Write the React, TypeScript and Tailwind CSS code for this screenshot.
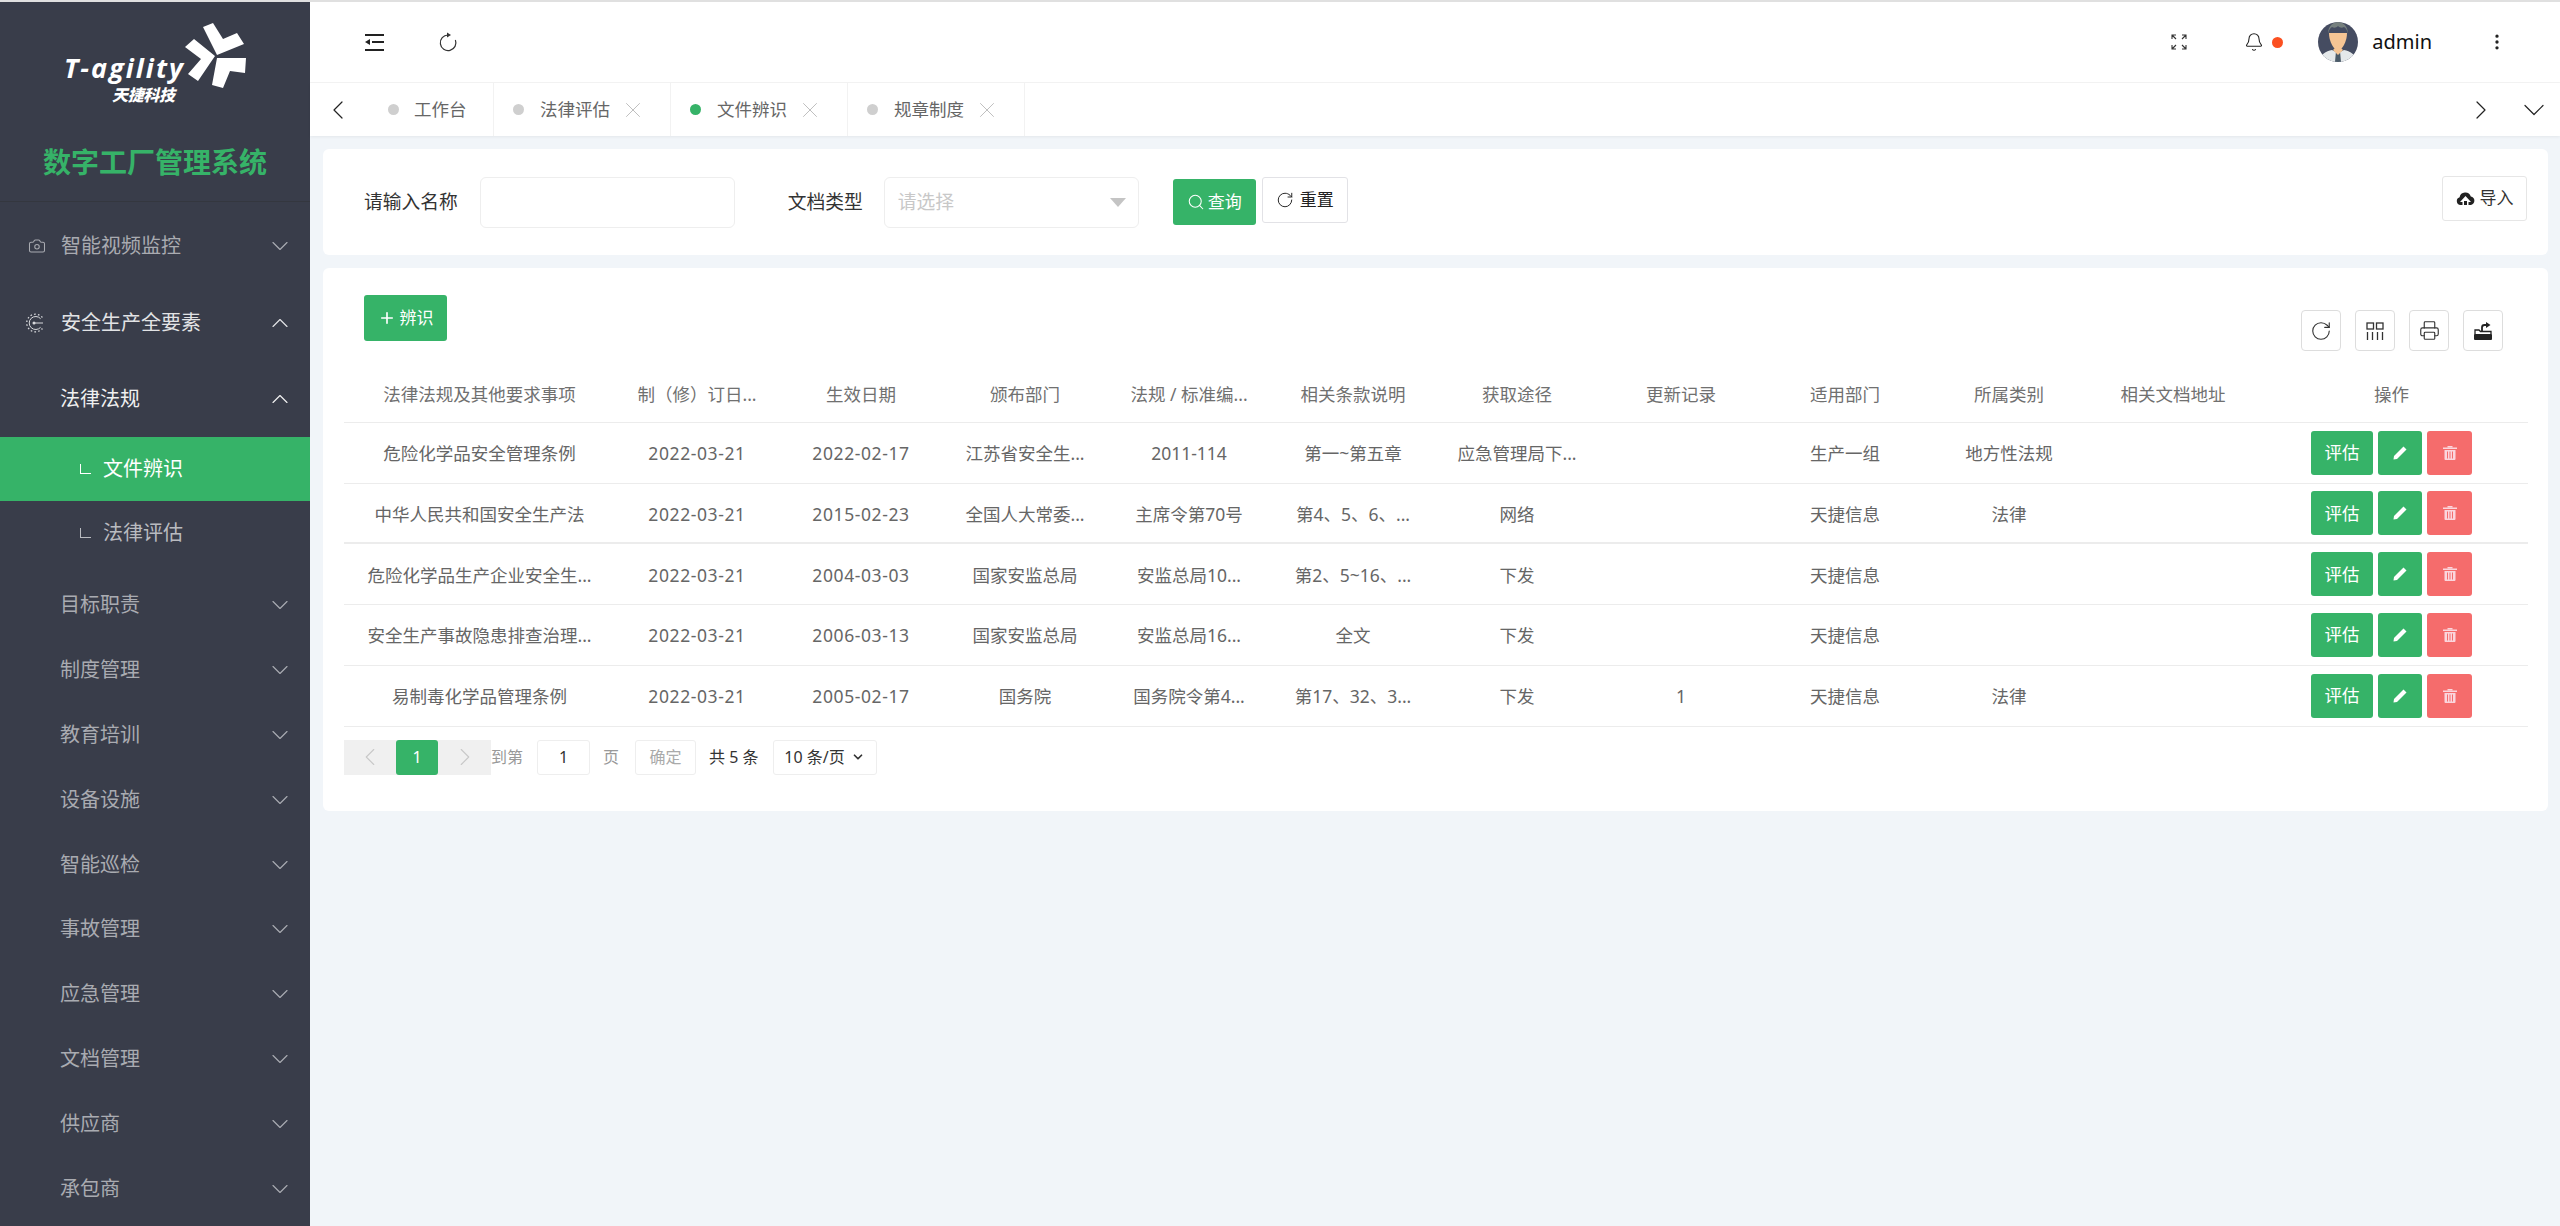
import { Bell, Camera, ChevronDown, ChevronLeft, ChevronRight, ChevronUp, EllipsisVertical, Plus, Printer, RotateCw, Search, X } from "lucide-react";

const rows = [
  ["危险化学品安全管理条例", "2022-03-21", "2022-02-17", "江苏省安全生...", "2011-114", "第一~第五章", "应急管理局下...", "", "生产一组", "地方性法规", ""],
  ["中华人民共和国安全生产法", "2022-03-21", "2015-02-23", "全国人大常委...", "主席令第70号", "第4、5、6、...", "网络", "", "天捷信息", "法律", ""],
  ["危险化学品生产企业安全生...", "2022-03-21", "2004-03-03", "国家安监总局", "安监总局10...", "第2、5~16、...", "下发", "", "天捷信息", "", ""],
  ["安全生产事故隐患排查治理...", "2022-03-21", "2006-03-13", "国家安监总局", "安监总局16...", "全文", "下发", "", "天捷信息", "", ""],
  ["易制毒化学品管理条例", "2022-03-21", "2005-02-17", "国务院", "国务院令第4...", "第17、32、3...", "下发", "1", "天捷信息", "法律", ""],
];

const headers = ["法律法规及其他要求事项", "制（修）订日...", "生效日期", "颁布部门", "法规 / 标准编...", "相关条款说明", "获取途径", "更新记录", "适用部门", "所属类别", "相关文档地址", "操作"];

const menus = ["目标职责", "制度管理", "教育培训", "设备设施", "智能巡检", "事故管理", "应急管理", "文档管理", "供应商", "承包商"];

const tabs = [
  { name: "法律评估", active: false },
  { name: "文件辨识", active: true },
  { name: "规章制度", active: false },
];

function Logo() {
  return (
    <svg width="310" height="110" viewBox="0 0 310 110" className="block">
      <g fill="#ffffff">
        <polygon points="203,25 213,21 223,37 237,31 244,42 217,53" />
        <polygon points="185,45 194,37 215,54 198,79 188,72 201,57" />
        <polygon points="217,56 246,56 245,71 230,69 223,86 212,83" />
        <text x="64" y="76" fontSize="27" fontWeight="700" fontStyle="italic" textLength="119" fontFamily="'Open Sans', sans-serif">T-agility</text>
        <text x="112" y="99" fontSize="16" fontWeight="900" fontStyle="italic" textLength="63" fontFamily="'Noto Sans CJK SC', sans-serif">天捷科技</text>
      </g>
    </svg>
  );
}

function SafetyIcon() {
  return (
    <svg width="20" height="20" viewBox="0 0 20 20" fill="none" stroke="#d8d9dc" strokeLinecap="butt">
      <path d="M16.400 4.500A8.800 8.800 0 1 0 16.400 15.500" strokeWidth="1.300" strokeDasharray="1.600 2.200" />
      <path d="M14.600 5.700A6.500 6.500 0 1 0 14.600 14.300" strokeWidth="1" />
      <path d="M8 10h9" strokeWidth="1" />
      <circle cx="8" cy="10" r="1.500" fill="#d8d9dc" stroke="none" />
    </svg>
  );
}

function OutdentIcon() {
  return (
    <svg width="19" height="17" viewBox="0 0 19 17" fill="#222222">
      <rect x="0" y="0" width="19" height="2" />
      <rect x="7" y="7" width="12" height="2" />
      <rect x="0" y="15" width="19" height="2" />
      <polygon points="0,8 5,5 5,11" />
    </svg>
  );
}

function ReloadIcon() {
  return (
    <svg width="20" height="20" viewBox="0 0 20 20" fill="none" stroke="#333333" strokeWidth="1.200">
      <path d="M10 3A7.800 7.800 0 1 0 17.400 8" />
      <polygon points="9,0.500 13,3 9,5.500" fill="#333333" stroke="none" />
    </svg>
  );
}

function FullscreenIcon() {
  return (
    <svg width="16" height="16" viewBox="0 0 16 16" fill="none" stroke="#333333" strokeWidth="1.100">
      <path d="M1 5V1h4M1 1l4 4M11 1h4v4M15 1l-4 4M1 11v4h4M1 15l4-4M15 11v4h-4M15 15l-4-4" />
    </svg>
  );
}

function Avatar() {
  return (
    <svg width="40" height="40" viewBox="0 0 40 40" className="rounded-full">
      <rect width="40" height="40" fill="#454c61" />
      <path d="M2 40c0-8 6-11 12-12l6 3 6-3c6 1 12 4 12 12z" fill="#e4e8ea" />
      <path d="M18 29h4l1 11h-6z" fill="#4a5a68" />
      <path d="M11 11c0 7 3 13 6 16h6c3-3 6-9 6-16z" fill="#f6c594" />
      <path d="M15 28l5 5 5-5-3-3h-4z" fill="#f6c594" />
      <path d="M10 12C10 4 15 0 20 0s10 4 10 12c-1-4-2-6-4-7-2 1-4 1-6-1-2 2-4 2-6 1-2 1-3 3-4 7z" fill="#76807e" />
    </svg>
  );
}

function ColumnsIcon() {
  return (
    <svg width="18" height="18" viewBox="0 0 18 18" fill="none" stroke="#333333" strokeWidth="1.300">
      <rect x="1" y="1" width="6.500" height="6" />
      <rect x="10.500" y="1" width="6.500" height="6" />
      <path d="M1.500 10v8M6.500 10v8M11.500 10v8M16.500 10v8" />
    </svg>
  );
}

function ExportIcon() {
  return (
    <svg width="18" height="18" viewBox="0 0 18 18">
      <rect x="0" y="12" width="18" height="6" rx="1" fill="#222222" />
      <path d="M1 12.500V8h4l1.500 1.500H17V12.500" fill="none" stroke="#222222" strokeWidth="1.300" />
      <path d="M8 9V5.500C8 4 9 3 10.500 3H13" fill="none" stroke="#222222" strokeWidth="1.800" />
      <polygon points="12,0 16.500,3 12,6" fill="#222222" />
    </svg>
  );
}

function CloudIcon() {
  return (
    <svg width="19" height="15" viewBox="0 0 19 15">
      <path d="M4.500 14A4 4 0 0 1 3.600 6.200 5.800 5.800 0 0 1 14.800 5.400 4.400 4.400 0 0 1 15 14h-2.500v-3H15L9.500 5 4 11h2.500v3z" fill="#222222" />
      <rect x="8" y="10" width="3" height="4" fill="#222222" />
    </svg>
  );
}

function PencilIcon() {
  return (
    <svg width="14" height="14" viewBox="0 0 14 14" fill="#ffffff">
      <path d="M10.500 0.500 13.500 3.500 4 13 0.500 13.500 1 10z" />
    </svg>
  );
}

function TrashIcon() {
  return (
    <svg width="14" height="14" viewBox="0 0 14 14" fill="#fbd5dc">
      <rect x="0" y="1.500" width="14" height="1.500" />
      <rect x="4.500" y="0" width="5" height="1.500" />
      <path d="M1.500 4h11v9a1 1 0 0 1-1 1h-9a1 1 0 0 1-1-1zM4 5.500v7h1v-7zM6.500 5.500v7h1v-7zM9 5.500v7h1v-7z" fillRule="evenodd" />
    </svg>
  );
}

function Sidebar() {
  return (
    <aside className="h-full w-[310px] shrink-0 overflow-hidden border-t-2 border-[#e0e0e0] bg-[#393d4a]">
      <Logo />
      <div className="h-[90px] border-b border-[#34373f] pt-[32px] text-center text-[28px] leading-[36px] font-bold text-[#36b368]">数字工厂管理系统</div>
      <div className="mt-[11px] flex h-[65px] items-center pr-[16px] pl-[28px] text-[20px] text-[#a9abb1]">
        <Camera size={18} strokeWidth={1.4} />
        <span className="ml-[15px]">智能视频监控</span>
        <ChevronDown size={28} className="ml-auto" strokeWidth={1} />
      </div>
      <div className="mt-[12px] flex h-[65px] items-center pr-[16px] pl-[26px] text-[20px] text-[#e2e3e5]">
        <SafetyIcon />
        <span className="ml-[15px]">安全生产全要素</span>
        <ChevronUp size={28} className="ml-auto" strokeWidth={1} />
      </div>
      <div className="mt-[11px] flex h-[65px] items-center pr-[16px] pl-[60px] text-[20px] text-[#f0f0f0]">
        <span>法律法规</span>
        <ChevronUp size={28} className="ml-auto" strokeWidth={1} />
      </div>
      <div className="mt-[6px] mb-[8px]">
        <div className="flex h-[64px] items-center bg-[#36b368] pl-[80px] text-[20px] text-white">
          <span className="h-[10px] w-[11px] border-b border-l border-white" />
          <span className="ml-[12px]">文件辨识</span>
        </div>
        <div className="flex h-[64px] items-center pl-[80px] text-[20px] text-[#b9bbc0]">
          <span className="h-[10px] w-[11px] border-b border-l border-[#b9bbc0]" />
          <span className="ml-[12px]">法律评估</span>
        </div>
      </div>
      {menus.map((m) => (
        <div key={m} className="flex h-[64.8px] items-center pr-[16px] pl-[60px] text-[20px] text-[#a9abb1]">
          <span>{m}</span>
          <ChevronDown size={28} className="ml-auto" strokeWidth={1} />
        </div>
      ))}
    </aside>
  );
}

function TopBar() {
  return (
    <>
      <header className="flex h-[83px] shrink-0 items-center border-t-2 border-b border-t-[#e0e0e0] border-b-[#f4f4f4] bg-white pr-[53px] pl-[55px]">
        <OutdentIcon />
        <span className="ml-[54px] flex"><ReloadIcon /></span>
        <div className="ml-auto flex items-center">
          <FullscreenIcon />
          <Bell size={20} strokeWidth={1.3} className="ml-[57px] text-[#222]" />
          <span className="ml-[8px] h-[11px] w-[11px] rounded-full bg-[#fb5021]" />
          <span className="ml-[35px] flex"><Avatar /></span>
          <span className="ml-[14px] text-[20px] text-[#111]">admin</span>
          <EllipsisVertical size={20} strokeWidth={2} className="ml-[55px] text-[#222]" />
        </div>
      </header>
      <div className="flex h-[53px] shrink-0 items-stretch bg-white text-[17.500px] text-[#666] shadow-[0_1px_3px_rgba(0,0,0,0.06)]">
        <div className="flex w-[59px] items-center pl-[12px]">
          <ChevronLeft size={32} strokeWidth={0.9} className="text-[#222]" />
        </div>
        <div className="flex w-[125px] items-center border-r border-[#f2f2f2] pl-[19px]">
          <span className="h-[11px] w-[11px] rounded-full bg-[#cfcfcf]" />
          <span className="ml-[15px]">工作台</span>
        </div>
        {tabs.map((t) => (
          <div key={t.name} className="flex w-[177px] items-center border-r border-[#f2f2f2] pl-[19px]">
            <span className={t.active ? "h-[11px] w-[11px] rounded-full bg-[#36b368]" : "h-[11px] w-[11px] rounded-full bg-[#cfcfcf]"} />
            <span className="ml-[16px]">{t.name}</span>
            <X size={26} strokeWidth={0.7} className="ml-[10px] text-[#aaa]" />
          </div>
        ))}
        <div className="ml-auto flex items-center pr-[8px]">
          <ChevronRight size={32} strokeWidth={0.9} className="text-[#222]" />
          <ChevronDown size={36} strokeWidth={0.8} className="ml-[19px] text-[#222]" />
        </div>
      </div>
    </>
  );
}

function FilterCard() {
  return (
    <section className="flex h-[106px] items-center rounded-[6px] bg-white pr-[21px] pl-[41px] text-[18.750px] text-[#333]">
      <span>请输入名称</span>
      <div className="ml-[22px] h-[51px] w-[255px] rounded-[6px] border border-[#eeeeee]" />
      <span className="ml-[53px]">文档类型</span>
      <div className="ml-[21px] flex h-[51px] w-[255px] items-center rounded-[6px] border border-[#eeeeee] pr-[12px] pl-[13px] text-[#c8c8c8]">
        <span>请选择</span>
        <span className="ml-auto h-0 w-0 border-x-[8px] border-t-[9px] border-x-transparent border-t-[#c4c4c4]" />
      </div>
      <button className="ml-[34px] flex h-[46px] w-[83px] items-center justify-center gap-[3px] rounded-[3px] bg-[#36b368] text-[17px] text-white">
        <Search size={18} strokeWidth={1.4} />
        查询
      </button>
      <button className="ml-[6px] flex h-[46px] w-[86px] -translate-y-[2px] items-center justify-center gap-[6px] rounded-[3px] border border-[#e2e2e6] text-[17px] text-[#222]">
        <RotateCw size={18} strokeWidth={1.3} />
        重置
      </button>
      <button className="ml-auto flex h-[45px] w-[85px] -translate-y-[4px] items-center justify-center gap-[5px] rounded-[3px] border border-[#e6e6e6] text-[17px] text-[#333]">
        <CloudIcon />
        导入
      </button>
    </section>
  );
}

function Pagination() {
  return (
    <div className="mt-[13px] flex h-[35px] items-center text-[16px] text-[#999]">
      <div className="flex h-full w-[147px] items-stretch bg-[#f0f0f0] text-[#c8c8c8]">
        <span className="flex w-[52px] items-center justify-center"><ChevronLeft size={30} strokeWidth={0.9} /></span>
        <span className="flex w-[42px] items-center justify-center rounded-[3px] bg-[#36b368] text-white">1</span>
        <span className="flex w-[53px] items-center justify-center"><ChevronRight size={30} strokeWidth={0.9} /></span>
      </div>
      <span>到第</span>
      <span className="ml-[14px] flex h-[35px] w-[53px] items-center justify-center rounded-[3px] border border-[#eeeeee] text-[#333]">1</span>
      <span className="ml-[13px]">页</span>
      <span className="ml-[16px] flex h-[35px] w-[61px] items-center justify-center rounded-[3px] border border-[#eeeeee] text-[#aaa]">确定</span>
      <span className="ml-[13px] text-[#333]">共 5 条</span>
      <span className="ml-[14px] flex h-[35px] w-[104px] items-center justify-center gap-[6px] rounded-[3px] border border-[#eeeeee] text-[#333]">
        10 条/页
        <ChevronDown size={14} strokeWidth={3} />
      </span>
    </div>
  );
}

function TableCard() {
  return (
    <section className="mt-[13px] rounded-[6px] bg-white px-[21px] pt-[27px] pb-[36px]">
      <div className="flex h-[56px] justify-between pr-[24px] pl-[20px]">
        <button className="flex h-[46px] w-[83px] items-center justify-center gap-[4px] rounded-[3px] bg-[#36b368] text-[17px] text-white">
          <Plus size={18} strokeWidth={2.2} />
          辨识
        </button>
        <div className="mt-[15px] flex h-[41px] gap-[14px] text-[#333]">
          <span className="flex w-[40px] items-center justify-center rounded-[4px] border border-[#dddddd]"><RotateCw size={22} strokeWidth={1.2} /></span>
          <span className="flex w-[40px] items-center justify-center rounded-[4px] border border-[#dddddd]"><ColumnsIcon /></span>
          <span className="flex w-[40px] items-center justify-center rounded-[4px] border border-[#dddddd]"><Printer size={21} strokeWidth={1.3} /></span>
          <span className="flex w-[40px] items-center justify-center rounded-[4px] border border-[#dddddd]"><ExportIcon /></span>
        </div>
      </div>
      <table className="mt-[15px] w-[2184px] table-fixed text-center text-[17.500px] text-[#666]">
        <colgroup>
          <col className="w-[271px]" />
          {headers.slice(1, 11).map((h) => (
            <col key={h} className="w-[164px]" />
          ))}
          <col className="w-[273px]" />
        </colgroup>
        <thead>
          <tr className="h-[56px] border-b border-[#ececec]">
            {headers.map((h) => (
              <th key={h} className="pt-[1px] font-normal text-[#707070]">{h}</th>
            ))}
          </tr>
        </thead>
        <tbody>
          {rows.map((row, i) => (
            <tr key={i} className={i === 1 ? "h-[60px] border-b-2 border-[#ececec]" : "h-[61px] border-b border-[#ececec]"}>
              {row.map((c, j) => (
                <td key={j} className={j === 1 || j === 2 ? "pt-[2px] tracking-[0.6px]" : "pt-[2px]"}>{c}</td>
              ))}
              <td>
                <div className="flex justify-center gap-[5px] text-white">
                  <button className="h-[44px] w-[62px] rounded-[3px] bg-[#36b368]">评估</button>
                  <button className="flex h-[44px] w-[44px] items-center justify-center rounded-[3px] bg-[#36b368]"><PencilIcon /></button>
                  <button className="flex h-[44px] w-[45px] items-center justify-center rounded-[3px] bg-[#f56c6c]"><TrashIcon /></button>
                </div>
              </td>
            </tr>
          ))}
        </tbody>
      </table>
      <Pagination />
    </section>
  );
}

export default function App() {
  return (
    <div className="flex h-screen w-full overflow-hidden bg-[#f1f5f9] font-['Noto_Sans','Noto_Sans_CJK_SC',sans-serif]">
      <Sidebar />
      <main className="flex min-w-0 flex-1 flex-col">
        <TopBar />
        <div className="pt-[13px] pr-[12px] pl-[13px]">
          <FilterCard />
          <TableCard />
        </div>
      </main>
    </div>
  );
}
